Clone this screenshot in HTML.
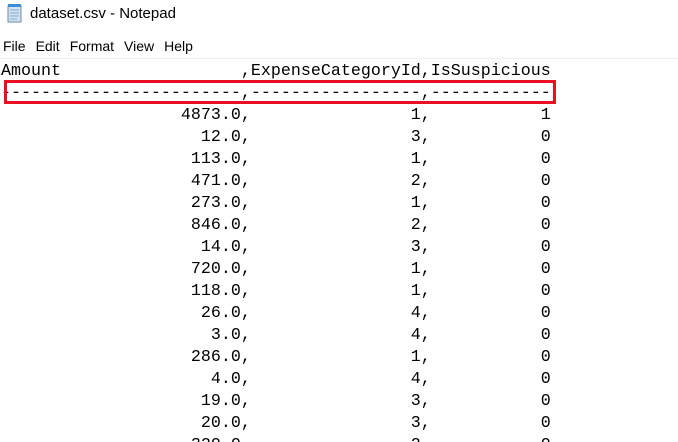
<!DOCTYPE html>
<html><head><meta charset="utf-8"><style>
html,body{margin:0;padding:0;background:#fff;width:678px;height:442px;overflow:hidden;position:relative}
.title{position:absolute;left:30px;top:5px;font:15px "Liberation Sans",sans-serif;color:#000}
.menu{position:absolute;left:3px;top:38px;font:14px "Liberation Sans",sans-serif;color:#000;word-spacing:0}
.menu span{margin-right:10px}
.sep{position:absolute;left:0;top:58px;width:678px;height:1px;background:#f0f0f0}
pre{position:absolute;left:1px;top:61px;margin:0;font:16.667px "Liberation Mono",monospace;line-height:22px;color:#000;letter-spacing:0}
.box{position:absolute;left:4px;top:80px;width:546px;height:18px;border:3px solid #e81123}
</style></head><body>
<svg style="position:absolute;left:5px;top:3px" width="20" height="20" viewBox="0 0 20 20">
<rect x="3" y="3" width="13" height="16" fill="#cfe3f3" stroke="#6d8aa3" stroke-width="1"/>
<path d="M5 7h9M5 10h9M5 13h9M5 16h7" stroke="#8aaac4" stroke-width="1"/>
<rect x="3" y="1" width="13" height="3" fill="#3d8ed6"/>
</svg>
<div class="title">dataset.csv - Notepad</div>
<div class="menu"><span>File</span><span>Edit</span><span>Format</span><span>View</span><span>Help</span></div>
<div class="sep"></div>
<pre id="p"></pre>
<div class="box"></div>
<script>
function L(s,n){while(s.length<n)s=' '+s;return s}
function R(s,n){while(s.length<n)s=s+' ';return s}
var rows=[["4873.0",1,1],["12.0",3,0],["113.0",1,0],["471.0",2,0],["273.0",1,0],["846.0",2,0],["14.0",3,0],["720.0",1,0],["118.0",1,0],["26.0",4,0],["3.0",4,0],["286.0",1,0],["4.0",4,0],["19.0",3,0],["20.0",3,0],["320.0",2,0]];
var t=R("Amount",24)+",ExpenseCategoryId,IsSuspicious\n"+"-".repeat(24)+","+"-".repeat(17)+","+"-".repeat(12)+"\n";
rows.forEach(function(r){t+=L(r[0],24)+","+L(""+r[1],17)+","+L(""+r[2],12)+"\n"});
document.getElementById("p").textContent=t;
</script>
</body></html>
